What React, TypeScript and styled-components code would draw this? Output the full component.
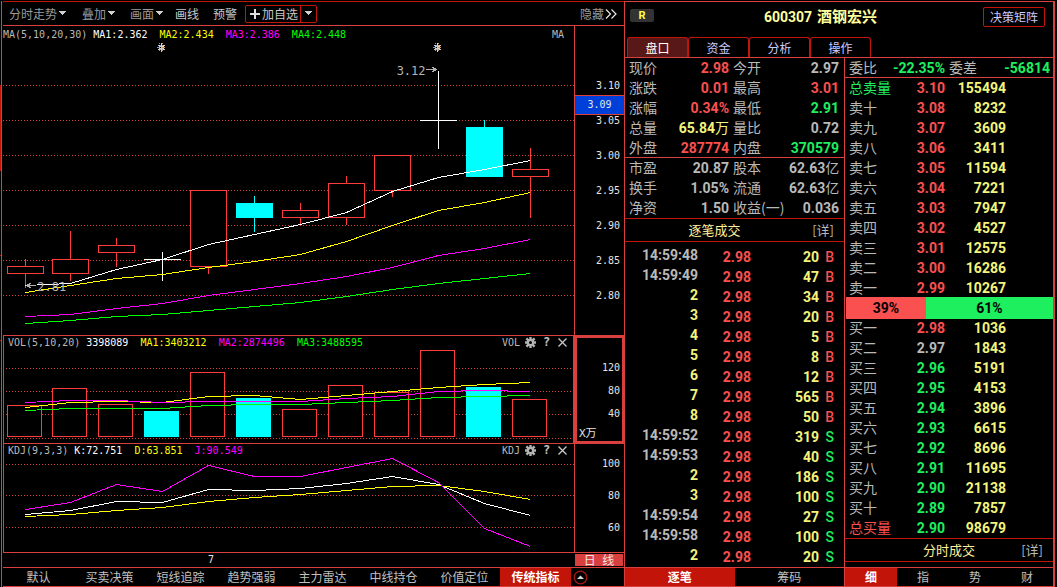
import React from "react";
import styled, { createGlobalStyle } from "styled-components";

const RED = "#d84040";
const DEEP = "#c3140a";
const CANDLE = "#ff3c3c";

const tone = {
  red: "#fb5050",
  green: "#1eef5f",
  yellow: "#f4f47c",
  gray: "#b9b9b9",
};
type Tone = keyof typeof tone;

const CJK = '"Noto Sans CJK SC", sans-serif';
const NUM = 'Roboto, "Noto Sans CJK SC", sans-serif';
const MONO = '"DejaVu Sans Mono", "Noto Sans CJK SC", monospace';

const GlobalStyle = createGlobalStyle`
  *, *::before, *::after { box-sizing: border-box; }
  body { margin: 0; background: #000; color: #b9b9b9; font: 12px/18px ${CJK}; }
  button { font: inherit; color: inherit; background: none; border: 0; padding: 0; margin: 0; cursor: pointer; }
  a { color: inherit; text-decoration: none; }
  svg { display: block; }
`;

const Page = styled.div`
  display: flex;
  min-height: 100vh;
  min-width: 960px;
  padding: 1px 2px 0 0;
`;

/* ---------- left edge strip ---------- */
const EdgeStrip = styled.div`
  width: 3px;
  flex: none;
  display: flex;
  flex-direction: column;
  padding-right: 1px;
  background: linear-gradient(${RED}, ${RED}) 1px 0 / 1px 100% no-repeat;
`;
const EdgeTab = styled.div<{ $active?: boolean }>`
  width: 1px;
  height: 85px;
  border-bottom: 1px solid ${DEEP};
  background: ${(p) => (p.$active ? DEEP : "transparent")};
`;

/* ---------- workspace ---------- */
const Workspace = styled.main`
  flex: 1;
  min-width: 0;
  display: flex;
  flex-direction: column;
  border-top: 1px solid ${DEEP};
  border-bottom: 1px solid ${RED};
`;
const Toolbar = styled.div`
  display: flex;
  align-items: center;
  height: 24px;
  padding: 0 7px 0 6px;
  border-bottom: 1px solid ${RED};
`;
const ToolButton = styled.button<{ $bright?: boolean; $space: number }>`
  display: flex;
  align-items: center;
  gap: 1px;
  margin-right: ${(p) => p.$space}px;
  color: ${(p) => (p.$bright ? "#c8c8c8" : "#9a9a9a")};
`;
const SplitButton = styled.div`
  display: flex;
  height: 18px;
  border: 1px solid ${DEEP};
  border-radius: 2px;
  color: #c8c8c8;
  line-height: 16px;
`;
const SplitMain = styled.button`
  display: flex;
  align-items: center;
  gap: 2px;
  padding: 0 2px 0 4px;
`;
const SplitArrow = styled.button`
  display: flex;
  align-items: center;
  justify-content: center;
  width: 16px;
  border-left: 1px solid ${DEEP};
`;
const Spacer = styled.div`
  flex: 1;
`;

const ChartRow = styled.section<{ $divided?: boolean }>`
  display: flex;
  border-top: ${(p) => (p.$divided ? `1px solid ${RED}` : "0")};
`;
const Plot = styled.div<{ $edge?: boolean }>`
  position: relative;
  flex: 1;
  min-width: 0;
  border-left: ${(p) => (p.$edge ? `1px solid ${RED}` : "0")};
`;
const PlotHeader = styled.div<{ $tall?: boolean }>`
  display: flex;
  align-items: center;
  gap: 12px;
  height: ${(p) => (p.$tall ? 16 : 14)}px;
  padding: ${(p) => (p.$tall ? "2px 10px 0 0" : "0 6px 0 4px")};
  font: 10px/12px ${MONO};
  white-space: nowrap;
`;
const Lead = styled.span`
  display: flex;
  gap: 6px;
`;
const Reading = styled.span<{ $color: string }>`
  color: ${(p) => p.$color};
`;
const PlotTools = styled.div`
  display: flex;
  align-items: center;
  gap: 5px;
  margin-left: auto;
`;
const PlotTool = styled.button`
  display: flex;
  align-items: center;
  justify-content: center;
  width: 11px;
  height: 12px;
  padding-bottom: 1px;
  font: bold 12px/11px ${MONO};
  color: #c0c0c0;
`;
const Canvas = styled.svg<{ $h: number }>`
  width: 100%;
  height: ${(p) => p.$h}px;
`;
const Callout = styled.span<{ $x: number; $y: number; $end?: boolean }>`
  position: absolute;
  left: ${(p) => p.$x}%;
  top: ${(p) => p.$y}px;
  transform: ${(p) => (p.$end ? "translateX(-100%)" : "none")};
  font: 12px/14px ${MONO};
  color: #b4b4b4;
`;

const Axis = styled.div<{ $top: number; $focus?: boolean }>`
  position: relative;
  flex: none;
  width: 50px;
  padding: ${(p) => p.$top}px 4px 0 4px;
  border-left: 1px solid ${RED};
  font: 10px/12px ${MONO};
  color: #e4e4e4;
  box-shadow: ${(p) => (p.$focus ? `0 0 0 1px ${RED}, inset 0 0 0 2px ${RED}` : "none")};
`;
const Tick = styled.div<{ $h: number }>`
  line-height: ${(p) => p.$h}px;
  text-align: right;
`;
const Unit = styled.div`
  font-size: 11px;
  line-height: 18px;
`;
const PriceMarker = styled.div`
  position: absolute;
  left: 0;
  right: 0;
  top: 69px;
  height: 20px;
  line-height: 18px;
  text-align: center;
  background: #0040d8;
  border: solid ${RED};
  border-width: 1px 0;
`;

const DateRow = styled.div`
  display: flex;
  height: 16px;
  border: solid ${RED};
  border-width: 1px 0;
  font: 10px/14px ${MONO};
  color: #e4e4e4;
`;
const DateTrack = styled.div`
  flex: 1;
  padding-left: 33%;
`;
const Period = styled.button`
  width: 48px;
  height: 12px;
  margin: 1px 1px 0 0;
  background: ${RED};
  color: #f0e0e0;
  font: 12px/12px ${CJK};
  word-spacing: 4px;
`;

const TabBar = styled.div`
  display: flex;
  flex: none;
  height: 18px;
`;
const BarTab = styled.button<{ $active?: boolean }>`
  flex: 1;
  height: 18px;
  line-height: 18px;
  text-align: center;
  white-space: nowrap;
  font-weight: ${(p) => (p.$active ? 700 : 400)};
  background: ${(p) => (p.$active ? DEEP : "transparent")};
  color: ${(p) => (p.$active ? "#fff" : "#c0c0c0")};
`;
const TabBarEnd = styled.button`
  display: flex;
  align-items: center;
  width: 53px;
  padding-left: 2px;
`;

/* ---------- quote panel ---------- */
const Quote = styled.aside`
  flex: none;
  width: 431px;
  display: flex;
  flex-direction: column;
  border: solid ${RED};
  border-width: 1px 2px 1px 1px;
`;
const QuoteHead = styled.header`
  display: grid;
  grid-template-columns: 1fr auto 1fr;
  align-items: center;
  height: 30px;
  padding: 0 8px 0 5px;
`;
const Badge = styled.span`
  justify-self: start;
  align-self: start;
  width: 24px;
  height: 13px;
  margin-top: 7px;
  border-radius: 2px;
  background: #333;
  color: #ffff40;
  font: bold 11px/13px ${NUM};
  text-align: center;
`;
const Title = styled.h1`
  display: flex;
  align-items: center;
  gap: 5px;
  margin: 0;
  padding-right: 34px;
  color: #ffff9c;
  font: bold 14px/20px ${NUM};
`;
const StockName = styled.span`
  font-size: 15px;
`;
const HeadButton = styled.button`
  justify-self: end;
  width: 62px;
  height: 20px;
  border: 1px solid ${DEEP};
  border-radius: 2px;
  color: #ccccff;
  line-height: 18px;
`;
const QuoteTabs = styled.nav`
  display: flex;
  height: 26px;
  padding: 5px 0 0 2px;
  border-bottom: 1px solid ${RED};
`;
const QuoteTab = styled.button<{ $active?: boolean }>`
  width: 61px;
  border: solid ${DEEP};
  border-width: 1px 1px 0;
  border-radius: 3px 3px 0 0;
  background: ${(p) => (p.$active ? "#581818" : "transparent")};
  color: ${(p) => (p.$active ? "#fff" : "#ccccff")};
  line-height: 18px;
`;
const QuoteBody = styled.div`
  flex: 1;
  display: flex;
`;
const Column = styled.section<{ $w?: number }>`
  display: flex;
  flex-direction: column;
  flex: ${(p) => (p.$w ? `0 0 ${p.$w}px` : "1")};
  min-width: 0;
  border-right: ${(p) => (p.$w ? `1px solid ${RED}` : "0")};
`;
const Grid = styled.table`
  width: 100%;
  table-layout: fixed;
  border-collapse: separate;
  border-spacing: 0;
`;
const Row = styled.tr<{ $ruled?: boolean }>`
  height: 20px;
  & > * {
    border-bottom: ${(p) => (p.$ruled ? `1px solid ${RED}` : "0")};
  }
`;
const Name = styled.th<{ $tone?: Tone }>`
  padding: 0 0 0 4px;
  text-align: left;
  vertical-align: top;
  white-space: nowrap;
  font: 14px/19px ${CJK};
  color: ${(p) => tone[p.$tone ?? "gray"]};
`;
const Value = styled.td<{ $tone: Tone; $pad?: number }>`
  padding: 1px ${(p) => p.$pad ?? 0}px 0 0;
  text-align: right;
  vertical-align: top;
  white-space: nowrap;
  font: bold 14px/18px ${NUM};
  color: ${(p) => tone[p.$tone]};
`;
const TimeCell = styled(Value)`
  padding-top: 0;
  line-height: 16px;
`;
const Side = styled(Value)`
  font-weight: 500;
`;
const Measure = styled.span`
  font-weight: 400;
`;
const SectionHead = styled.div<{ $shift?: number }>`
  display: grid;
  grid-template-columns: 1fr auto 1fr;
  align-items: center;
  height: 24px;
  padding: 0 10px;
  border: solid ${DEEP};
  border-width: 1px 0;
  & > h2 {
    padding-right: ${(p) => p.$shift ?? 0}px;
  }
`;
const SectionTitle = styled.h2`
  grid-column: 2;
  margin: 0;
  color: #fff09c;
  font: 13px/20px ${CJK};
`;
const Detail = styled.a`
  justify-self: end;
  font: 13px/22px ${CJK};
`;
const Ticks = styled.div`
  flex: 1;
  padding-top: 5px;
`;
const Ratio = styled.div`
  position: relative;
  display: flex;
  height: 22px;
  margin: -1px 0 -1px 1px;
  color: #000;
  font: bold 14px/23px ${NUM};
  text-align: center;
`;
const RatioPart = styled.div<{ $share: number; $color: string }>`
  flex: ${(p) => p.$share};
  background: ${(p) => p.$color};
`;
const FootTabs = styled(TabBar)`
  height: 19px;
  border-top: 1px solid ${RED};
`;

/* ---------- data ---------- */
const XS = [25, 70, 116, 162, 208, 254, 300, 346, 392, 438, 484, 530];

type Kind = "up" | "down" | "flat";
interface Candle {
  kind: Kind;
  top: number;
  bottom: number;
  high: number;
  low: number;
  vol: number;
  volFilled?: boolean;
}
const candles: Candle[] = [
  { kind: "up", top: 266, bottom: 274, high: 259, low: 288, vol: 405 },
  { kind: "up", top: 259, bottom: 274, high: 231, low: 281, vol: 388 },
  { kind: "up", top: 245, bottom: 253, high: 238, low: 267, vol: 404 },
  { kind: "flat", top: 259, bottom: 260, high: 252, low: 281, vol: 411, volFilled: true },
  { kind: "up", top: 190, bottom: 267, high: 190, low: 274, vol: 372 },
  { kind: "down", top: 203, bottom: 218, high: 196, low: 232, vol: 398, volFilled: true },
  { kind: "up", top: 210, bottom: 218, high: 203, low: 224, vol: 409 },
  { kind: "up", top: 183, bottom: 218, high: 176, low: 225, vol: 385 },
  { kind: "up", top: 155, bottom: 191, high: 155, low: 197, vol: 392 },
  { kind: "flat", top: 120, bottom: 121, high: 71, low: 149, vol: 350 },
  { kind: "down", top: 127, bottom: 177, high: 120, low: 177, vol: 387, volFilled: true },
  { kind: "up", top: 169, bottom: 177, high: 148, low: 218, vol: 399 },
];

type Series = [string, number[]];
const priceLines: Series[] = [
  ["#fff", [285, 283, 269, 259, 244, 234, 224, 212, 191, 177, 169, 160]],
  ["#ff0", [292, 285, 278, 274, 267, 261, 254, 241, 225, 210, 202, 192]],
  ["#f0f", [316, 314, 308, 303, 295, 289, 283, 276, 267, 255, 248, 239]],
  ["#0f0", [323, 320, 316, 314, 310, 306, 302, 296, 289, 283, 278, 273]],
];
const volumeLines: Series[] = [
  ["#ff0", [407, 402, 401, 402, 396, 395, 399, 395, 391, 387, 384, 382]],
  ["#f0f", [402, 400, 400, 402, 401, 401, 401, 398, 396, 391, 390, 391]],
  ["#0f0", [410, 408, 408, 408, 405, 404, 404, 402, 400, 397, 396, 395]],
];
const kdjLines: Series[] = [
  ["#fff", [514, 510, 501, 502, 489, 490, 488, 483, 476, 484, 503, 515]],
  ["#ff0", [516, 514, 510, 507, 501, 497, 494, 490, 486, 485, 491, 499]],
  ["#f0f", [509, 502, 484, 491, 465, 476, 476, 467, 458, 482, 528, 546]],
];

type Cell = [string, string, Tone, string?];
const facts: [Cell, Cell, boolean?][] = [
  [["现价", "2.98", "red"], ["今开", "2.97", "gray"]],
  [["涨跌", "0.01", "red"], ["最高", "3.01", "red"]],
  [["涨幅", "0.34%", "red"], ["最低", "2.91", "green"]],
  [["总量", "65.84", "yellow", "万"], ["量比", "0.72", "gray"]],
  [["外盘", "287774", "red"], ["内盘", "370579", "green"], true],
  [["市盈", "20.87", "gray"], ["股本", "62.63", "gray", "亿"]],
  [["换手", "1.05%", "gray"], ["流通", "62.63", "gray", "亿"]],
  [["净资", "1.50", "gray"], ["收益(一)", "0.036", "gray"]],
];

const trades: [string, string, "B" | "S"][] = [
  ["14:59:48", "20", "B"],
  ["14:59:49", "47", "B"],
  ["2", "34", "B"],
  ["3", "20", "B"],
  ["4", "5", "B"],
  ["5", "8", "B"],
  ["6", "12", "B"],
  ["7", "565", "B"],
  ["8", "50", "B"],
  ["14:59:52", "319", "S"],
  ["14:59:53", "40", "S"],
  ["2", "186", "S"],
  ["3", "100", "S"],
  ["14:59:54", "27", "S"],
  ["14:59:58", "100", "S"],
  ["2", "20", "S"],
];

type Level = [string, string, string, Tone, Tone?];
const asks: Level[] = [
  ["总卖量", "3.10", "155494", "red", "green"],
  ["卖十", "3.08", "8232", "red"],
  ["卖九", "3.07", "3609", "red"],
  ["卖八", "3.06", "3411", "red"],
  ["卖七", "3.05", "11594", "red"],
  ["卖六", "3.04", "7221", "red"],
  ["卖五", "3.03", "7947", "red"],
  ["卖四", "3.02", "4527", "red"],
  ["卖三", "3.01", "12575", "red"],
  ["卖二", "3.00", "16286", "red"],
  ["卖一", "2.99", "10267", "red"],
];
const bids: Level[] = [
  ["买一", "2.98", "1036", "red"],
  ["买二", "2.97", "1843", "gray"],
  ["买三", "2.96", "5191", "green"],
  ["买四", "2.95", "4153", "green"],
  ["买五", "2.94", "3896", "green"],
  ["买六", "2.93", "6615", "green"],
  ["买七", "2.92", "8696", "green"],
  ["买八", "2.91", "11695", "green"],
  ["买九", "2.90", "21138", "green"],
  ["买十", "2.89", "7857", "green"],
  ["总买量", "2.90", "98679", "green", "red"],
];

/* ---------- drawings ---------- */
const Caret = () => (
  <svg width="9" height="5" viewBox="0 0 9 5" shapeRendering="crispEdges" aria-hidden="true">
    <path d="M1 0h7v1H1zM2 1h5v1H2zM3 2h3v1H3zM4 3h1v1H4z" fill="#d0d0d0" />
  </svg>
);
const Plus = () => (
  <svg width="10" height="10" viewBox="0 0 10 10" shapeRendering="crispEdges" aria-hidden="true">
    <path d="M4 0h2v4h4v2H6v4H4V6H0V4h4z" fill="#e0e0e0" />
  </svg>
);
const Chevrons = () => (
  <svg width="12" height="10" viewBox="0 0 12 10" aria-hidden="true">
    <path d="M1 .5 5.5 5 1 9.5M6.5 .5 11 5 6.5 9.5" fill="none" stroke="#e8e8e8" strokeWidth="1.2" />
  </svg>
);
const Gear = () => (
  <svg width="11" height="11" viewBox="0 0 11 11" aria-hidden="true">
    <g stroke="#b4b4b4" strokeWidth="2.4">
      <path d="M5.5 0v11M0 5.5h11M1.4 1.4l8.2 8.2M9.6 1.4 1.4 9.6" />
    </g>
    <circle cx="5.5" cy="5.5" r="3.6" fill="#b4b4b4" />
    <circle cx="5.5" cy="5.5" r="1.5" fill="#000" />
  </svg>
);
const Cross = () => (
  <svg width="9" height="9" viewBox="0 0 9 9" aria-hidden="true">
    <path d="M.5.5l8 8M8.5.5l-8 8" stroke="#c8c8c8" strokeWidth="1.3" />
  </svg>
);
const CircleUp = () => (
  <svg width="15" height="15" viewBox="0 0 15 15" aria-hidden="true">
    <circle cx="7.5" cy="7.5" r="6.3" fill="none" stroke="#a81810" strokeWidth="1.3" />
    <path d="M4 9h7L7.5 5.5z" fill="#d8d8d8" />
  </svg>
);

function Guides({ ys, from, to }: { ys: number[]; from: number; to: number }) {
  return (
    <g stroke={RED} strokeDasharray="1 2">
      {ys.map((y) => (
        <line key={y} x1={from} x2={to} y1={y + 0.5} y2={y + 0.5} />
      ))}
    </g>
  );
}
function Lines({ series }: { series: Series[] }) {
  return (
    <g fill="none">
      {series.map(([color, ys]) => (
        <polyline key={color} stroke={color} points={ys.map((y, i) => `${XS[i] + 0.5},${y + 0.5}`).join(" ")} />
      ))}
    </g>
  );
}
function CandleShape({ c, x }: { c: Candle; x: number }) {
  const color = c.kind === "up" ? CANDLE : c.kind === "down" ? "#0ff" : "#fff";
  return (
    <g fill={color}>
      {c.high < c.top && <rect x={x} y={c.high} width={1} height={c.top - c.high} />}
      {c.low > c.bottom && <rect x={x} y={c.bottom} width={1} height={c.low - c.bottom} />}
      {c.kind === "up" ? (
        <rect x={x - 17.5} y={c.top + 0.5} width={36} height={c.bottom - c.top - 1} fill="#000" stroke={color} />
      ) : (
        <rect x={x - 18} y={c.top} width={37} height={c.bottom - c.top} />
      )}
    </g>
  );
}
function VolumeShape({ c, x }: { c: Candle; x: number }) {
  return c.volFilled ? (
    <rect x={x - 18} y={c.vol} width={35} height={437 - c.vol} fill="#0ff" />
  ) : (
    <rect x={x - 17.5} y={c.vol + 0.5} width={34} height={436 - c.vol} fill="#000" stroke={CANDLE} />
  );
}
const Star = ({ x, y }: { x: number; y: number }) => (
  <g transform={`translate(${x} ${y})`}>
    <path d="M-2 -4h1v1h-1zM-1 -2h1v1h-1zM-4 0h3v1h-3zM-1 2h1v1h-1zM-2 3h1v1h-1z" fill="#7898d8" />
    <path d="M1 -4h1v1h-1zM1 -2h1v1h-1zM1 0h3v1h-3zM1 2h1v1h-1zM1 3h1v1h-1z" fill="#d09860" />
    <path d="M0 -4h1v9h-1zM-3 -2h2v1h-2zM2 -2h2v1h-2zM-3 2h2v1h-2zM2 2h2v1h-2zM-2 -1h5v1h-5zM-2 1h5v1h-5z" fill="#d0d0d0" />
  </g>
);

function IndicatorTools({ name }: { name: string }) {
  return (
    <PlotTools>
      <span>{name}</span>
      <PlotTool aria-label={`${name} 设置`}>
        <Gear />
      </PlotTool>
      <PlotTool aria-label={`${name} 帮助`}>?</PlotTool>
      <PlotTool aria-label={`${name} 关闭`}>
        <Cross />
      </PlotTool>
    </PlotTools>
  );
}

function DepthTable({ levels, label }: { levels: Level[]; label: string }) {
  return (
    <Grid aria-label={label}>
      <colgroup>
        <col style={{ width: 50 }} />
        <col style={{ width: 50 }} />
        <col style={{ width: 61 }} />
        <col />
      </colgroup>
      <tbody>
        {levels.map(([name, price, volume, color, nameTone]) => (
          <Row key={name}>
            <Name scope="row" $tone={nameTone}>
              {name}
            </Name>
            <Value $tone={color}>{price}</Value>
            <Value $tone="yellow">{volume}</Value>
            <td />
          </Row>
        ))}
      </tbody>
    </Grid>
  );
}

const GRID_Y = [85, 120, 155, 190, 225, 260, 295];

export default function App() {
  return (
    <>
      <GlobalStyle />
      <Page>
        <EdgeStrip>
          <EdgeTab />
          <EdgeTab $active />
          <EdgeTab />
          <EdgeTab />
        </EdgeStrip>

        <Workspace>
          <Toolbar>
            <ToolButton $space={15} aria-haspopup="menu">
              分时走势
              <Caret />
            </ToolButton>
            <ToolButton $space={14} aria-haspopup="menu">
              叠加
              <Caret />
            </ToolButton>
            <ToolButton $space={11} aria-haspopup="menu">
              画面
              <Caret />
            </ToolButton>
            <ToolButton $space={14} $bright>
              画线
            </ToolButton>
            <ToolButton $space={8} $bright>
              预警
            </ToolButton>
            <SplitButton>
              <SplitMain>
                <Plus />
                加自选
              </SplitMain>
              <SplitArrow aria-label="更多自选">
                <Caret />
              </SplitArrow>
            </SplitButton>
            <Spacer />
            <ToolButton $space={0}>
              隐藏
              <Chevrons />
            </ToolButton>
          </Toolbar>

          <ChartRow>
            <Plot>
              <PlotHeader $tall>
                <Lead>
                  <span>MA(5,10,20,30)</span>
                  <Reading $color="#fff">MA1:2.362</Reading>
                </Lead>
                <Reading $color="#ff0">MA2:2.434</Reading>
                <Reading $color="#f0f">MA3:2.386</Reading>
                <Reading $color="#0f0">MA4:2.448</Reading>
                <PlotTools>MA</PlotTools>
              </PlotHeader>
              <Canvas $h={293} viewBox="3 42 571 293" preserveAspectRatio="none" shapeRendering="crispEdges">
                <Guides ys={GRID_Y} from={3} to={574} />
                {candles.map((c, i) => (
                  <CandleShape key={i} c={c} x={XS[i]} />
                ))}
                <Lines series={priceLines} />
                <Star x={161} y={47} />
                <Star x={437} y={47} />
                <g fill="#b4b4b4">
                  <path d="M426 69h11v1h-11zM432 67h2v1h-2zM433 68h3v1h-3zM433 70h3v1h-3zM432 71h2v1h-2z" />
                  <path d="M26 285h10v1h-10zM29 283h2v1h-2zM27 284h3v1h-3zM27 286h3v1h-3zM29 287h2v1h-2z" />
                </g>
              </Canvas>
              <Callout $x={74} $y={38} $end>
                3.12
              </Callout>
              <Callout $x={6} $y={254}>
                2.81
              </Callout>
            </Plot>
            <Axis $top={42}>
              {["3.10", "3.05", "3.00", "2.95", "2.90", "2.85", "2.80"].map((t) => (
                <Tick key={t} $h={35}>
                  {t}
                </Tick>
              ))}
              <PriceMarker>3.09</PriceMarker>
            </Axis>
          </ChartRow>

          <ChartRow $divided>
            <Plot $edge>
              <PlotHeader>
                <Lead>
                  <span>VOL(5,10,20)</span>
                  <Reading $color="#fff">3398089</Reading>
                </Lead>
                <Reading $color="#ff0">MA1:3403212</Reading>
                <Reading $color="#f0f">MA2:2874496</Reading>
                <Reading $color="#0f0">MA3:3488595</Reading>
                <IndicatorTools name="VOL" />
              </PlotHeader>
              <Canvas $h={93} viewBox="4 350 570 93" preserveAspectRatio="none" shapeRendering="crispEdges">
                <Guides ys={[368, 391, 414, 438]} from={6} to={571} />
                {candles.map((c, i) => (
                  <VolumeShape key={i} c={c} x={XS[i]} />
                ))}
                <Lines series={volumeLines} />
              </Canvas>
            </Plot>
            <Axis $top={20} $focus>
              {["120", "80", "40"].map((t) => (
                <Tick key={t} $h={23}>
                  {t}
                </Tick>
              ))}
              <Unit>X万</Unit>
            </Axis>
          </ChartRow>

          <ChartRow $divided>
            <Plot $edge>
              <PlotHeader>
                <Lead>
                  <span>KDJ(9,3,3)</span>
                  <Reading $color="#fff">K:72.751</Reading>
                </Lead>
                <Reading $color="#ff0">D:63.851</Reading>
                <Reading $color="#f0f">J:90.549</Reading>
                <IndicatorTools name="KDJ" />
              </PlotHeader>
              <Canvas $h={94} viewBox="4 458 570 94" preserveAspectRatio="none" shapeRendering="crispEdges">
                <Guides ys={[464, 495, 527]} from={6} to={574} />
                <Lines series={kdjLines} />
              </Canvas>
            </Plot>
            <Axis $top={4}>
              {["100", "80", "60"].map((t) => (
                <Tick key={t} $h={32}>
                  {t}
                </Tick>
              ))}
            </Axis>
          </ChartRow>

          <DateRow>
            <DateTrack>7</DateTrack>
            <Period>日 线</Period>
          </DateRow>

          <TabBar>
            {["默认", "买卖决策", "短线追踪", "趋势强弱", "主力雷达", "中线持仓", "价值定位", "传统指标"].map((t) => (
              <BarTab key={t} $active={t === "传统指标"}>
                {t}
              </BarTab>
            ))}
            <TabBarEnd aria-label="展开">
              <CircleUp />
            </TabBarEnd>
          </TabBar>
        </Workspace>

        <Quote>
          <QuoteHead>
            <Badge>R</Badge>
            <Title>
              600307 <StockName>酒钢宏兴</StockName>
            </Title>
            <HeadButton>决策矩阵</HeadButton>
          </QuoteHead>
          <QuoteTabs>
            {["盘口", "资金", "分析", "操作"].map((t) => (
              <QuoteTab key={t} $active={t === "盘口"}>
                {t}
              </QuoteTab>
            ))}
          </QuoteTabs>
          <QuoteBody>
            <Column $w={220}>
              <Grid aria-label="盘口">
                <colgroup>
                  <col style={{ width: 40 }} />
                  <col style={{ width: 64 }} />
                  <col style={{ width: 60 }} />
                  <col />
                </colgroup>
                <tbody>
                  {facts.map(([a, b, ruled]) => (
                    <Row key={a[0]} $ruled={ruled}>
                      <Name scope="row">{a[0]}</Name>
                      <Value $tone={a[2]}>
                        {a[1]}
                        {a[3] && <Measure>{a[3]}</Measure>}
                      </Value>
                      <Name scope="row">{b[0]}</Name>
                      <Value $tone={b[2]} $pad={5}>
                        {b[1]}
                        {b[3] && <Measure>{b[3]}</Measure>}
                      </Value>
                    </Row>
                  ))}
                </tbody>
              </Grid>
              <SectionHead $shift={40}>
                <SectionTitle>逐笔成交</SectionTitle>
                <Detail href="#trades">[详]</Detail>
              </SectionHead>
              <Ticks id="trades">
                <Grid aria-label="逐笔成交">
                  <colgroup>
                    <col style={{ width: 73 }} />
                    <col style={{ width: 53 }} />
                    <col style={{ width: 68 }} />
                    <col />
                  </colgroup>
                  <tbody>
                    {trades.map(([time, volume, side], i) => (
                      <Row key={i}>
                        <TimeCell $tone={time.length > 1 ? "gray" : "yellow"}>{time}</TimeCell>
                        <Value $tone="red">2.98</Value>
                        <Value $tone="yellow">{volume}</Value>
                        <Side $tone={side === "B" ? "red" : "green"} $pad={10}>
                          {side}
                        </Side>
                      </Row>
                    ))}
                  </tbody>
                </Grid>
              </Ticks>
              <FootTabs>
                <BarTab $active>逐笔</BarTab>
                <BarTab>筹码</BarTab>
              </FootTabs>
            </Column>

            <Column>
              <Grid aria-label="委比">
                <colgroup>
                  <col style={{ width: 36 }} />
                  <col style={{ width: 64 }} />
                  <col style={{ width: 40 }} />
                  <col />
                </colgroup>
                <tbody>
                  <Row $ruled>
                    <Name scope="row">委比</Name>
                    <Value $tone="green">-22.35%</Value>
                    <Name scope="row">委差</Name>
                    <Value $tone="green" $pad={3}>
                      -56814
                    </Value>
                  </Row>
                </tbody>
              </Grid>
              <DepthTable levels={asks} label="卖盘" />
              <Ratio>
                <RatioPart $share={80} $color="#fb5050">
                  39%
                </RatioPart>
                <RatioPart $share={127} $color={tone.green}>
                  61%
                </RatioPart>
              </Ratio>
              <DepthTable levels={bids} label="买盘" />
              <SectionHead>
                <SectionTitle>分时成交</SectionTitle>
                <Detail href="#minutes">[详]</Detail>
              </SectionHead>
              <Spacer id="minutes" />
              <FootTabs>
                {["细", "指", "势", "财"].map((t) => (
                  <BarTab key={t} $active={t === "细"}>
                    {t}
                  </BarTab>
                ))}
              </FootTabs>
            </Column>
          </QuoteBody>
        </Quote>
      </Page>
    </>
  );
}
